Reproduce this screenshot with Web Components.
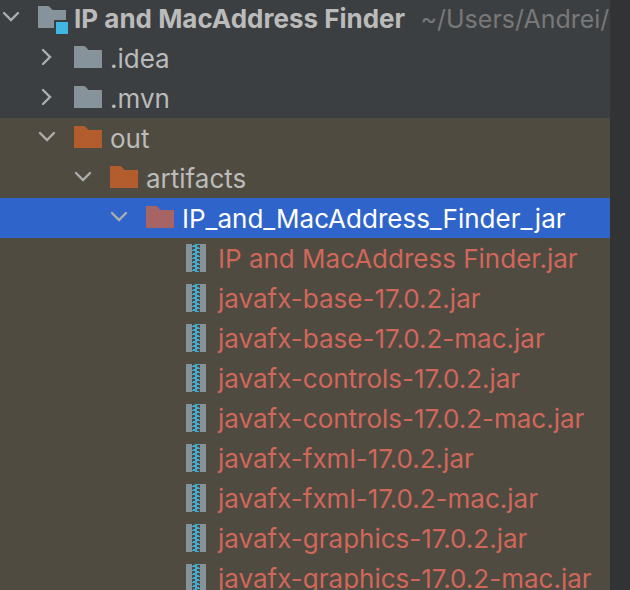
<!DOCTYPE html>
<html lang="en">
<head>
<meta charset="utf-8">
<meta name="viewport" content="width=device-width, initial-scale=1">
<title>Project</title>
<style>
    body {
        margin: 0;
        height: 100vh;
        overflow: hidden;
        background-color: #313335;
        font-family: Inter, "Liberation Sans", sans-serif;
        font-size: 26px;
        color: #bbbbbb;
    }
</style>
</head>
<body>
<project-panel>
    <tree-node name="IP and MacAddress Finder" path="~/Users/Andrei/" icon="module" open>
        <tree-node name=".idea" icon="folder"></tree-node>
        <tree-node name=".mvn" icon="folder"></tree-node>
        <tree-node name="out" icon="excluded" open>
            <tree-node name="artifacts" icon="excluded" open>
                <tree-node name="IP_and_MacAddress_Finder_jar" icon="ignored" open selected>
                    <tree-node name="IP and MacAddress Finder.jar" icon="jar"></tree-node>
                    <tree-node name="javafx-base-17.0.2.jar" icon="jar"></tree-node>
                    <tree-node name="javafx-base-17.0.2-mac.jar" icon="jar"></tree-node>
                    <tree-node name="javafx-controls-17.0.2.jar" icon="jar"></tree-node>
                    <tree-node name="javafx-controls-17.0.2-mac.jar" icon="jar"></tree-node>
                    <tree-node name="javafx-fxml-17.0.2.jar" icon="jar"></tree-node>
                    <tree-node name="javafx-fxml-17.0.2-mac.jar" icon="jar"></tree-node>
                    <tree-node name="javafx-graphics-17.0.2.jar" icon="jar"></tree-node>
                    <tree-node name="javafx-graphics-17.0.2-mac.jar" icon="jar"></tree-node>
                </tree-node>
            </tree-node>
        </tree-node>
    </tree-node>
</project-panel>

<script>
class ProjectPanel extends HTMLElement {
    constructor() {
        super();
        this.shadowDOM = this.attachShadow({mode: "open"});
    }

    connectedCallback() {
        this.render();
    }

    render() {
        this.shadowDOM.innerHTML = `
        <style>
        :host {
            display: flex;
            height: 100%;
        }

        .tree {
            flex: 1;
            min-width: 0;
            overflow: hidden;
            background-color: #3c3f41;
        }

        /* the list is scrolled down a little */
        .scrolled {
            margin-top: -2px;
        }

        .gutter {
            width: 20px;
            background-color: #313335;
        }
        </style>

        <div class="tree" role="tree" aria-label="Project">
            <div class="scrolled"><slot></slot></div>
        </div>
        <div class="gutter"></div>
        `
    }
}

class TreeIcon extends HTMLElement {
    constructor() {
        super();
        this.shadowDOM = this.attachShadow({mode: "open"});
    }

    connectedCallback() {
        this.render();
    }

    folder(color) {
        return `<path fill="${color}" d="M0 8h9.5q1.5 0 2.5 1.2L14.5 12H28v18H0z"/>`
    }

    jar() {
        // teeth of the zip lean right, then left, every four pixels
        let teeth = ''
        for (let y = 6; y < 34; y += 4) {
            teeth += `M13 ${y}h5v1h-5zM11 ${y + 1}h4v1h-4zM10 ${y + 2}h5v1h-5zM13 ${y + 3}h4v1h-4z`
        }
        return `<path fill="#87939a" d="M4 6h6v28H4zM18 6h6v28h-6z"/><path fill="#40b6e0" fill-opacity="0.9" d="${teeth}"/>`
    }

    shape() {
        switch (this.getAttribute('type')) {
            case 'module':
                return `<path fill="#87939a" d="M0 8h9.5q1.5 0 2.5 1.2L14.5 12H28v10H16v8H0z"/>
                    <path fill="#40b6e0" d="M18 24h12v12H18z"/>`
            case 'excluded':
                return this.folder('#b35c2e')
            case 'ignored':
                return this.folder('#a66464')
            case 'jar':
                return this.jar()
            default:
                return this.folder('#87939a')
        }
    }

    render() {
        this.shadowDOM.innerHTML = `
        <style>
        :host {
            display: block;
            width: 28px;
            height: 40px;
        }

        svg {
            display: block;
            overflow: visible;
        }
        </style>
        <svg width="28" height="40" viewBox="0 0 28 40" aria-hidden="true">${this.shape()}</svg>
        `
    }
}

class TreeNode extends HTMLElement {
    constructor() {
        super();
        this.shadowDOM = this.attachShadow({mode: "open"});
    }

    connectedCallback() {
        this.setAttribute('role', 'treeitem');
        this.render();
    }

    get level() {
        const parent = this.parentElement.closest('tree-node');
        return parent ? parent.level + 1 : 0;
    }

    toggle() {
        this.toggleAttribute('open');
        this.render();
    }

    chevron() {
        if (this.getAttribute('icon') === 'jar') {
            return '<span></span>'
        }
        const open = this.hasAttribute('open');
        const points = open ? '2,15 9,22 16,15' : '5,12 12,19 5,26';
        return `
        <button type="button" aria-label="${open ? 'Collapse' : 'Expand'}">
            <svg width="18" height="40" viewBox="0 0 18 40"><polyline points="${points}"/></svg>
        </button>`
    }

    render() {
        const path = this.getAttribute('path');
        this.shadowDOM.innerHTML = `
        <style>
        :host {
            display: block;
        }

        :host([icon="excluded"]) {
            background-color: #4f4b41;
        }

        .row {
            display: grid;
            grid-template-columns: 36px 36px auto;
            justify-content: start;
            height: 40px;
            padding-left: ${this.level * 36 + 2}px;
            line-height: 42px;
            white-space: nowrap;
        }

        :host([icon="jar"]) .row {
            color: #d1675a;
        }

        :host([selected]) .row {
            background-color: #2f65ca;
            color: white;
        }

        :host([path]) .name {
            font-weight: bold;
        }

        .path {
            margin-left: 8px;
            font-size: 25px;
            color: #787878;
        }

        button {
            display: block;
            width: 18px;
            height: 40px;
            padding: 0;
            border: 0;
            background: none;
            cursor: pointer;
        }

        button svg {
            display: block;
        }

        polyline {
            fill: none;
            stroke: #adadad;
            stroke-width: 2.4;
            stroke-linecap: round;
        }

        :host(:not([open])) .children {
            display: none;
        }
        </style>

        <div class="row">
            ${this.chevron()}
            <tree-icon type="${this.getAttribute('icon')}"></tree-icon>
            <div class="label"><span class="name">${this.getAttribute('name')}</span>${path ? ` <span class="path">${path}</span>` : ''}</div>
        </div>
        <div class="children" role="group"><slot></slot></div>
        `
        const button = this.shadowDOM.querySelector('button');
        if (button) {
            button.addEventListener('click', () => this.toggle());
        }
    }
}

customElements.define('project-panel', ProjectPanel)
customElements.define('tree-icon', TreeIcon)
customElements.define('tree-node', TreeNode)
</script>
</body>
</html>
